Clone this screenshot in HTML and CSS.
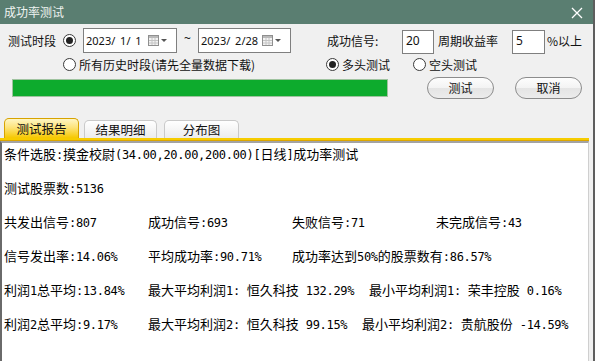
FILE: index.html
```html
<!DOCTYPE html>
<html lang="zh">
<head>
<meta charset="utf-8">
<title>成功率测试</title>
<link rel="stylesheet" href="styles.css">
</head>
<body>
<div class="win">
  <div class="titlebar">
    <span class="title">成功率测试</span>
    <svg class="close" width="12" height="12" viewBox="0 0 12 12"><path d="M1 1 L11 11 M11 1 L1 11" stroke="#ffffff" stroke-width="1.3" fill="none"/></svg>
  </div>

  <div class="row r1">
    <span class="lbl l-period">测试时段</span>
    <span class="radio on r-period"></span>
    <div class="date d1">
      <span class="dtext">2023/ 1/ 1</span>
      <svg class="cal" width="20" height="11" viewBox="0 0 20 11"><rect x="0.5" y="0.5" width="10" height="10" fill="#f3f3f3" stroke="#8f8f8f"/><rect x="1" y="1" width="9" height="2" fill="#b9b9b9"/><path d="M1 5.5 H10 M1 8 H10 M4 3 V10 M7 3 V10" stroke="#c4c4c4" stroke-width="1"/><path d="M13 4 L19 4 L16 7 Z" fill="#555"/></svg>
    </div>
    <span class="tilde">~</span>
    <div class="date d2">
      <span class="dtext">2023/ 2/28</span>
      <svg class="cal" width="20" height="11" viewBox="0 0 20 11"><rect x="0.5" y="0.5" width="10" height="10" fill="#f3f3f3" stroke="#8f8f8f"/><rect x="1" y="1" width="9" height="2" fill="#b9b9b9"/><path d="M1 5.5 H10 M1 8 H10 M4 3 V10 M7 3 V10" stroke="#c4c4c4" stroke-width="1"/><path d="M13 4 L19 4 L16 7 Z" fill="#555"/></svg>
    </div>
    <span class="lbl l-sig">成功信号:</span>
    <div class="num n1">20</div>
    <span class="lbl l-rate">周期收益率</span>
    <div class="num n2">5</div>
    <span class="lbl l-pct">%以上</span>
  </div>

  <div class="row r2">
    <span class="opt o-all"><span class="radio"></span>所有历史时段(请先全量数据下载)</span>
    <span class="opt o-long"><span class="radio on"></span>多头测试</span>
    <span class="opt o-short"><span class="radio"></span>空头测试</span>
  </div>

  <div class="row r3">
    <div class="progress"></div>
    <button class="btn b-test">测试</button>
    <button class="btn b-cancel">取消</button>
  </div>

  <div class="tabs">
    <div class="tab active">测试报告</div>
    <div class="tab t2">结果明细</div>
    <div class="tab t3">分布图</div>
  </div>

  <div class="report">
    <div class="line">条件选股<span class="m">:</span>摸金校尉<span class="m">(34.00,20.00,200.00)[</span>日线<span class="m">]</span>成功率测试</div>
    <div class="line">测试股票数<span class="m">:5136</span></div>
    <div class="line cols">
      <span class="c">共发出信号<span class="m">:807</span></span>
      <span class="c">成功信号<span class="m">:693</span></span>
      <span class="c">失败信号<span class="m">:71</span></span>
      <span class="c">未完成信号<span class="m">:43</span></span>
    </div>
    <div class="line cols">
      <span class="c">信号发出率<span class="m">:14.06%</span></span>
      <span class="c">平均成功率<span class="m">:90.71%</span></span>
      <span class="c wide">成功率达到<span class="m">50%</span>的股票数有<span class="m">:86.57%</span></span>
    </div>
    <div class="line cols">
      <span class="c">利润<span class="m">1</span>总平均<span class="m">:13.84%</span></span>
      <span class="c max1">最大平均利润<span class="m">1: </span>恒久科技<span class="m"> 132.29%</span></span>
      <span class="c wide">最小平均利润<span class="m">1: </span>荣丰控股<span class="m"> 0.16%</span></span>
    </div>
    <div class="line cols">
      <span class="c">利润<span class="m">2</span>总平均<span class="m">:9.17%</span></span>
      <span class="c max2">最大平均利润<span class="m">2: </span>恒久科技<span class="m"> 99.15%</span></span>
      <span class="c wide">最小平均利润<span class="m">2: </span>贵航股份<span class="m"> -14.59%</span></span>
    </div>
  </div>
</div>
</body>
</html>
```

FILE: styles.css
```css
* { box-sizing: border-box; }

html, body {
  margin: 0;
  padding: 0;
  width: 595px;
  height: 361px;
  overflow: hidden;
  background: #f0f0f0;
}

.win {
  width: 595px;
  height: 361px;
  border-right: 2px solid #5e5e5e;
  background: #f0f0f0;
  font-family: "Noto Sans CJK SC", "Noto Sans", sans-serif;
  font-size: 12px;
  color: #111;
  overflow: hidden;
}

.titlebar {
  height: 24px;
  background: #5a7e71;
  display: flex;
  align-items: center;
  justify-content: space-between;
  padding: 0 10px 0 4px;
}

.title {
  color: #eef3f0;
  font-size: 12px;
  line-height: 24px;
}

.close { display: block; margin-top: 2px; }

.row {
  display: flex;
  align-items: center;
}

.r1 {
  margin-top: 4px;
  height: 25px;
  padding-left: 8px;
}

.lbl { flex: none; white-space: nowrap; }

.l-period { width: 48px; }

.radio {
  flex: none;
  display: inline-block;
  width: 13px;
  height: 13px;
  border: 1px solid #3a3a3a;
  border-radius: 50%;
  background: #fff;
  position: relative;
}

.radio.on::after {
  content: "";
  position: absolute;
  left: 2px;
  top: 2px;
  width: 7px;
  height: 7px;
  border-radius: 50%;
  background: #222;
}

.r-period { margin-left: 7px; }

.date {
  flex: none;
  height: 25px;
  border: 1px solid #7f7f7f;
  background: #fff;
  display: flex;
  align-items: center;
  padding-left: 2px;
  padding-right: 8px;
  font-family: "Noto Sans", "DejaVu Sans", sans-serif;
  font-size: 11px;
  color: #111;
}

.d1 { margin-left: 7px; width: 94px; }
.d2 { width: 93px; }

.dtext { white-space: pre; word-spacing: 2px; }

.cal { display: block; margin-left: auto; }

.tilde {
  flex: none;
  width: 21px;
  text-align: center;
  font-family: "Noto Sans", sans-serif;
  font-size: 12px;
  margin-top: -4px;
}

.l-sig { margin-left: 36px; width: 75px; }

.num {
  flex: none;
  height: 24px;
  border: 1px solid #7f7f7f;
  background: #fff;
  padding: 3px 0 0 3px;
  font-family: "Noto Sans", sans-serif;
  font-size: 12px;
  line-height: 14px;
  margin-top: 2px;
}

.n1 { width: 32px; }
.n2 { width: 33px; }

.l-rate { margin-left: 4px; width: 74px; }
.l-pct { margin-left: 2px; }

.r2 {
  margin-top: 2px;
  height: 18px;
}

.opt {
  flex: none;
  display: flex;
  align-items: center;
  gap: 3px;
  white-space: nowrap;
}

.o-all { margin-left: 63px; width: 263px; }
.o-long { width: 87px; }

.r3 {
  margin-top: 3px;
  height: 23px;
}

.progress {
  flex: none;
  margin-left: 12px;
  width: 376px;
  height: 18px;
  background: #0dab2d;
  border: 1px solid #9fc39f;
}

.btn {
  flex: none;
  height: 22px;
  width: 67px;
  border: 1px solid #8c8c8c;
  border-radius: 11px;
  background: linear-gradient(#fdfdfd 0%, #f3f3f3 50%, #e4e4e4 51%, #ececec 100%);
  font-family: "Noto Sans CJK SC", sans-serif;
  font-size: 12px;
  color: #111;
  padding: 0;
  line-height: 20px;
}

.b-test { margin-left: 39px; }
.b-cancel { margin-left: 21px; }

.tabs {
  margin-top: 19px;
  height: 23px;
  display: flex;
  align-items: flex-end;
  padding-left: 4px;
  border-bottom: 3px solid #f6cc00;
  margin-right: 4px;
  position: relative;
}

.tabs::after {
  content: "";
  position: absolute;
  left: 0;
  right: 0;
  bottom: -3px;
  height: 1px;
  background: #dca600;
}

.tab {
  flex: none;
  height: 18px;
  border: 1px solid #c9c9c9;
  border-bottom: none;
  border-radius: 5px 5px 0 0;
  background: linear-gradient(#ffffff, #ececec);
  text-align: center;
  font-size: 12.5px;
  line-height: 18px;
  color: #111;
}

.tab.active {
  width: 75px;
  height: 20px;
  border-color: #d7a300;
  background: linear-gradient(#fff6c4 0%, #fde37a 45%, #f6c800 100%);
  line-height: 19px;
}

.t2 { width: 73px; margin-left: 5px; }
.t3 { width: 75px; margin-left: 7px; }

.report {
  margin-right: 4px;
  height: 221px;
  background: #fff;
  border-top: 2px solid #a3a3a3;
  border-left: 2px solid #6a6a6a;
  border-right: 1px solid #cfcfcf;
  padding: 2px 0 0 2px;
  font-family: "Noto Sans CJK SC", sans-serif;
  font-size: 13px;
  line-height: 17px;
  color: #000;
}

.m {
  font-family: "DejaVu Sans Mono", "Liberation Mono", monospace;
  font-size: 12px;
  letter-spacing: -0.3px;
}

.line {
  height: 17px;
  margin-bottom: 17px;
  white-space: pre;
}

.cols { display: flex; }

.c { flex: none; width: 144px; white-space: pre; }
.c.wide { width: auto; }
.c.max1 { width: 221px; }
.c.max2 { width: 214px; }
```
